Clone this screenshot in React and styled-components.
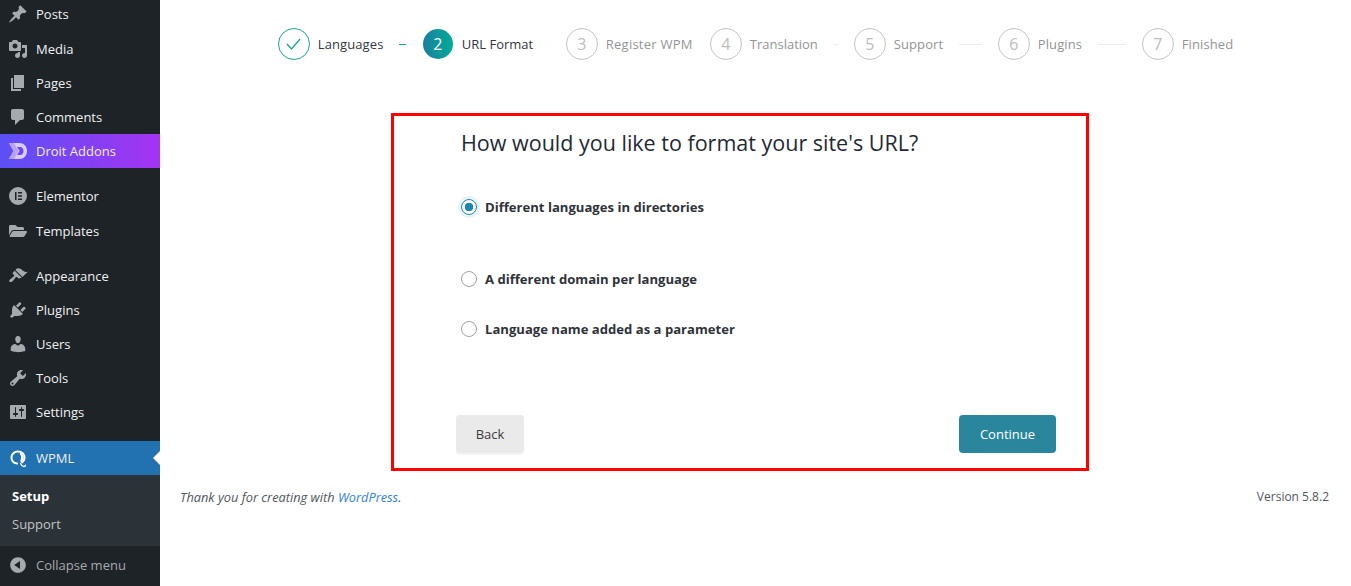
import React from 'react'
import styled, { createGlobalStyle } from 'styled-components'
import { FaFolderOpen } from 'react-icons/fa'

const Global = createGlobalStyle`
  html, body { margin: 0; padding: 0; height: 100%; background: #fff; }
  body { font-family: "Open Sans", "Liberation Sans", sans-serif; overflow: hidden; }
`

const Shell = styled.div`
  display: flex;
  height: 586px;
  overflow: hidden;
`

const Sidebar = styled.nav`
  width: 160px;
  flex: none;
  background: #1d2327;
  display: flex;
  flex-direction: column;
  overflow: hidden;
`

const Menu = styled.ul`
  list-style: none;
  margin: -3px 0 0;
  padding: 0;
`

const MenuItem = styled.li`
  position: relative;
  height: 34px;
  margin-top: ${p => p.$gap || 0}px;
  display: flex;
  align-items: center;
  padding-left: 8px;
  color: #f0f0f1;
  font-size: 13px;
  background: ${p => p.$bg || 'transparent'};
  svg { flex: none; }
`

const IconSlot = styled.span`
  width: 20px;
  height: 20px;
  margin-right: 8px;
  color: #a7aaad;
  display: flex;
  align-items: center;
  justify-content: center;
`

const Pointer = styled.span`
  position: absolute;
  right: 0;
  top: 10px;
  border: 7px solid transparent;
  border-left-width: 0;
  border-right-color: #fff;
`

const SubMenu = styled.ul`
  list-style: none;
  margin: 0;
  padding: 7px 0 8px;
  height: 71px;
  box-sizing: border-box;
  background: #2c3338;
`

const SubItem = styled.li`
  height: 28px;
  display: flex;
  align-items: center;
  padding-left: 12px;
  font-size: 13px;
  font-weight: ${p => (p.$active ? 700 : 400)};
  color: ${p => (p.$active ? '#fff' : '#c3c4c7')};
`

const Collapse = styled.div`
  display: flex;
  align-items: center;
  height: 38px;
  padding: 0 0 2px 8px;
  font-size: 13px;
  color: #a7aaad;
`

const Main = styled.main`
  flex: 1;
  min-width: 0;
  display: flex;
  flex-direction: column;
`

const Stepper = styled.ol`
  list-style: none;
  display: flex;
  justify-content: center;
  margin: 28px 0 0;
  padding: 0;
`

const Step = styled.li`
  display: flex;
  align-items: center;
  height: 32px;
  width: ${p => (p.$last ? 'auto' : '144px')};
  font-size: 13px;
  color: ${p => (p.$state === 'todo' ? '#949494' : '#33373d')};
`

const Circle = styled.span`
  width: 32px;
  height: 32px;
  box-sizing: border-box;
  flex: none;
  border-radius: 50%;
  border: 1px solid ${p => (p.$state === 'done' ? '#17a78f' : '#c4c4c4')};
  color: #bdbdbd;
  font-size: 16px;
  margin-right: 8px;
  display: flex;
  align-items: center;
  justify-content: center;
`

const ActiveCircle = styled(Circle)`
  width: 30px;
  height: 30px;
  margin: 0 9px 0 1px;
  border: none;
  color: #fff;
  background: linear-gradient(90deg, #1d7f9f, #01ac96);
`

const StepLabel = styled.span`
  white-space: nowrap;
  letter-spacing: ${p => p.$track || 0}px;
`

const StepLine = styled.span`
  flex: 1;
  height: 1px;
  margin: 0 16px;
  background: ${p => (p.$done ? '#17a78f' : '#ececec')};
`

const Card = styled.section`
  box-sizing: border-box;
  width: 698px;
  height: 358px;
  margin: 53px 0 0 231px;
  border: 3px solid #f00;
  padding: 0 30px 15px 62px;
  display: flex;
  flex-direction: column;
`

const Heading = styled.h2`
  margin: 10px 0 0 5px;
  font-size: 21.5px;
  line-height: 34px;
  font-weight: 400;
  color: #1f2a33;
`

const Options = styled.div`
  display: flex;
  flex-direction: column;
  margin: 35px 0 0 5px;
`

const Option = styled.label`
  display: flex;
  align-items: center;
  height: 24px;
  margin-bottom: ${p => p.$after}px;
  font-size: 13.1px;
  font-weight: 700;
  color: #2f3338;
`

const Radio = styled.span`
  box-sizing: border-box;
  width: 16px;
  height: 16px;
  margin-right: 8px;
  border-radius: 50%;
  border: 1px solid ${p => (p.$checked ? '#1f86ab' : '#a0a0a0')};
  background: ${p => (p.$checked ? 'radial-gradient(circle, #1f86ab 0 4px, #fff 4.6px)' : '#fff')};
  box-shadow: ${p => (p.$checked ? '0 0 0 3px #e8f3f7' : 'none')};
`

const Actions = styled.div`
  margin-top: auto;
  display: flex;
  justify-content: space-between;
`

const Button = styled.button`
  height: 38px;
  padding: 0;
  width: ${p => (p.$primary ? '97px' : '68px')};
  border: none;
  border-radius: 4px;
  font: 400 13px "Open Sans", "Liberation Sans", sans-serif;
  color: ${p => (p.$primary ? '#fff' : '#3a3a3f')};
  background: ${p => (p.$primary ? '#29869d' : '#eaeaea')};
  box-shadow: ${p => (p.$primary ? 'none' : '0 2px 0 #f3f3f3')};
`

const Footer = styled.footer`
  display: flex;
  justify-content: space-between;
  margin-top: 17px;
  padding: 0 22px 0 20px;
  font-size: 12px;
  line-height: 18px;
  color: #50575e;
`

const Thanks = styled.span`
  font-size: 12.8px;
  font-style: italic;
  a { color: #2f7fe8; text-decoration: none; }
`

const Dash = ({ d, size = 20 }) => (
  <svg width={size} height={size} viewBox="0 0 20 20" fill="currentColor"><path d={d} /></svg>
)

const DroitLogo = () => (
  <svg width="20" height="18" viewBox="0 0 20 18">
    <path fill="#d9cdfd" d="M1 1h10c5 0 8 3.500 8 8s-3 8-8 8H1l4.500-8z" />
    <path fill="#b9a3fa" d="M1 1h5l4.500 8L6 17H1l4.500-8z" />
    <path fill="#6f47f6" d="M9 5h3c2.500 0 3.500 2 3.500 4s-1 4-3.500 4H9l2.500-4z" />
  </svg>
)

const ElementorLogo = () => (
  <svg width="20" height="20" viewBox="0 0 20 20" fill="currentColor">
    <path fillRule="evenodd" d="M10 1a9 9 0 1 1 0 18 9 9 0 0 1 0-18zM7 6v8h1.500V6zm3 0v1.500h4V6zm0 3.200v1.500h4V9.200zm0 3.300V14h4v-1.500z" />
  </svg>
)

const WpmlLogo = () => (
  <svg width="20" height="22" viewBox="0 0 20 22" fill="none" stroke="#fff" strokeWidth="2" strokeLinecap="round">
    <path d="M9 16.500C5.500 16 3.500 13.500 3.500 10.500c0-3.600 2.800-6 6.500-6s6.500 2.400 6.500 6c0 2.200-1 3.800-2.500 4.800" />
    <path d="M13 6.500c1.500 2 1.500 5 .5 7.500" strokeWidth="2.400" />
    <path d="M12.500 16.500c.8 1.700 1.800 3 3.300 3 .9 0 1.700-.5 1.700-1.300" strokeWidth="1.300" />
  </svg>
)

const icons = {
  posts: 'M10.44 3.02l1.82-1.82 6.36 6.35-1.83 1.82c-1.05-.68-2.48-.57-3.41.36l-.75.75c-.92.93-1.04 2.35-.35 3.41l-1.83 1.82-2.41-2.41-2.8 2.79c-.42.42-3.38 2.71-3.8 2.29s1.86-3.39 2.28-3.81l2.79-2.79L4.100 9.360l1.830-1.820c1.050.690 2.480.570 3.400-.360l.750-.750c.930-.920 1.050-2.350.360-3.410z',
  media: 'M13 11V4c0-.55-.45-1-1-1h-1.670L9 1H5L3.670 3H2c-.55 0-1 .45-1 1v7c0 .55.45 1 1 1h10c.55 0 1-.45 1-1zM7 4.500c1.380 0 2.500 1.120 2.500 2.500S8.380 9.500 7 9.500 4.500 8.380 4.500 7 5.620 4.500 7 4.500zM14 6h5v10.500c0 1.380-1.120 2.500-2.500 2.500S14 17.880 14 16.500s1.120-2.500 2.500-2.500c.170 0 .340.020.500.050V9h-3V6zm-4 8.050V13h2v3.500c0 1.380-1.120 2.500-2.500 2.500S7 17.880 7 16.500 8.120 14 9.500 14c.170 0 .340.020.500.050z',
  pages: 'M6 15V2h10v13H6zm-1 1h8v2H3V5h2v11z',
  comments: 'M5 2h9c1.100 0 2 .9 2 2v7c0 1.100-.9 2-2 2h-2l-5 5v-5H5c-1.100 0-2-.9-2-2V4c0-1.100.9-2 2-2z',
  appearance: 'M14.480 11.060L7.410 3.990l1.500-1.500c.5-.56 2.300-.47 3.510.32 1.210.8 1.430 1.280 2.910 2.100 1.180.64 2.450 1.260 4.450.85zm-.71.71L6.700 4.700 4.930 6.470c-.39.39-.39 1.020 0 1.410l1.060 1.060c.39.39.39 1.030 0 1.420-.6.6-1.430 1.110-2.210 1.690-.35.26-.7.53-1.010.84C1.430 13.230.76 14.940 1.500 15.700s2.470.1 3.810-1.230c.3-.3.55-.65.8-1 .59-.8 1.130-1.620 1.700-2.200.39-.39 1.030-.39 1.420 0l1.060 1.060c.39.39 1.020.39 1.410 0z',
  plugins: 'M13.110 4.360L9.870 7.600 8 5.730l3.240-3.240c.35-.34 1.050-.2 1.560.32.52.51.66 1.210.31 1.550zm-8 1.770l.91-1.120 9.010 9.010-1.190.84c-.71.71-2.630 1.160-3.820 1.160H6.140L4.900 17.260c-.59.59-1.540.59-2.120 0-.59-.58-.59-1.530 0-2.120l1.240-1.240v-3.880c0-1.130.4-3.190 1.090-3.890zm7.260 3.970l3.240-3.240c.34-.35 1.040-.21 1.550.31.52.51.66 1.210.31 1.550l-3.240 3.250z',
  users: 'M10 9.250c-2.270 0-2.730-3.440-2.730-3.440C7 4.020 7.820 2 9.970 2c2.160 0 2.980 2.020 2.710 3.810 0 0-.41 3.440-2.680 3.440zm0 2.570L12.720 10c2.390 0 4.520 2.330 4.520 4.530v2.490s-3.650 1.130-7.240 1.130c-3.650 0-7.240-1.130-7.240-1.130v-2.490c0-2.250 1.940-4.480 4.470-4.480z',
  tools: 'M16.680 9.770c-1.340 1.340-3.300 1.670-4.950.99l-5.410 6.520c-.99.99-2.590.99-3.580 0s-.99-2.590 0-3.570l6.520-5.420c-.68-1.650-.35-3.610.99-4.950 1.280-1.280 3.120-1.620 4.720-1.060l-2.890 2.890 2.820 2.820 2.860-2.870c.53 1.580.18 3.390-1.080 4.650zM3.810 16.210c.4.39 1.040.39 1.430 0 .4-.4.4-1.040 0-1.430-.39-.4-1.030-.4-1.430 0-.39.39-.39 1.030 0 1.430z',
  settings: 'M18 16V4c0-.55-.45-1-1-1H3c-.55 0-1 .45-1 1v12c0 .55.45 1 1 1h14c.55 0 1-.45 1-1zM8 11h1c.55 0 1 .45 1 1s-.45 1-1 1H8v1.500c0 .28-.22.5-.5.5s-.5-.22-.5-.5V13H6c-.55 0-1-.45-1-1s.45-1 1-1h1V5.500c0-.28.22-.5.5-.5s.5.22.5.5V11zm5-2h-1c-.55 0-1-.45-1-1s.45-1 1-1h1V5.500c0-.28.22-.5.5-.5s.5.22.5.5V7h1c.55 0 1 .45 1 1s-.45 1-1 1h-1v5.500c0 .28-.22.5-.5.5s-.5-.22-.5-.5V9z',
  collapse: 'M10 2.160c4.330 0 7.840 3.510 7.840 7.840s-3.510 7.840-7.840 7.840S2.160 14.330 2.160 10 5.710 2.160 10 2.160zm2 11.720V6.120L6.180 9.970z',
}

const menu = [
  { label: 'Posts', icon: <Dash d={icons.posts} /> },
  { label: 'Media', icon: <Dash d={icons.media} />, gap: 1 },
  { label: 'Pages', icon: <Dash d={icons.pages} /> },
  { label: 'Comments', icon: <Dash d={icons.comments} /> },
  { label: 'Droit Addons', icon: <DroitLogo />, bg: 'linear-gradient(90deg, #5b50f5, #a533f2)' },
  { label: 'Elementor', icon: <ElementorLogo />, gap: 11 },
  { label: 'Templates', icon: <FaFolderOpen size={18} />, gap: 1 },
  { label: 'Appearance', icon: <Dash d={icons.appearance} />, gap: 11 },
  { label: 'Plugins', icon: <Dash d={icons.plugins} /> },
  { label: 'Users', icon: <Dash d={icons.users} /> },
  { label: 'Tools', icon: <Dash d={icons.tools} /> },
  { label: 'Settings', icon: <Dash d={icons.settings} /> },
  { label: 'WPML', icon: <WpmlLogo />, gap: 12, bg: '#2271b1', current: true },
]

const steps = [
  { label: 'Languages', track: 0.1 },
  { label: 'URL Format' },
  { label: 'Register WPM', track: 0.25 },
  { label: 'Translation' },
  { label: 'Support', track: 0.1 },
  { label: 'Plugins', track: 0.1 },
  { label: 'Finished', track: 0.1 },
]

const options = [
  { label: 'Different languages in directories', checked: true, after: 48 },
  { label: 'A different domain per language', after: 26 },
  { label: 'Language name added as a parameter', after: 0 },
]

export default function App() {
  return (
    <Shell>
      <Global />
      <Sidebar>
        <Menu>
          {menu.map(item => (
            <MenuItem key={item.label} $gap={item.gap} $bg={item.bg}>
              <IconSlot>{item.icon}</IconSlot>
              {item.label}
              {item.current && <Pointer />}
            </MenuItem>
          ))}
        </Menu>
        <SubMenu>
          <SubItem $active>Setup</SubItem>
          <SubItem>Support</SubItem>
        </SubMenu>
        <Collapse>
          <IconSlot><Dash d={icons.collapse} /></IconSlot>
          Collapse menu
        </Collapse>
      </Sidebar>
      <Main>
        <Stepper>
          {steps.map((step, i) => {
            const state = i === 0 ? 'done' : i === 1 ? 'active' : 'todo'
            const last = i === steps.length - 1
            return (
              <Step key={step.label} $state={state} $last={last}>
                {state === 'active' ? (
                  <ActiveCircle>{i + 1}</ActiveCircle>
                ) : (
                  <Circle $state={state}>
                    {state === 'done' ? (
                      <svg width="15" height="12" viewBox="0 0 15 12" fill="none" stroke="#17a78f" strokeWidth="1.300">
                        <path d="M1 6l4.500 5L14 1" />
                      </svg>
                    ) : i + 1}
                  </Circle>
                )}
                <StepLabel $track={step.track}>{step.label}</StepLabel>
                {!last && <StepLine $done={i === 0} />}
              </Step>
            )
          })}
        </Stepper>
        <Card>
          <Heading>How would you like to format your site's URL?</Heading>
          <Options>
            {options.map(o => (
              <Option key={o.label} $after={o.after}>
                <Radio $checked={o.checked} />
                {o.label}
              </Option>
            ))}
          </Options>
          <Actions>
            <Button>Back</Button>
            <Button $primary>Continue</Button>
          </Actions>
        </Card>
        <Footer>
          <Thanks>Thank you for creating with <a href="#wp">WordPress</a>.</Thanks>
          <span>Version 5.8.2</span>
        </Footer>
      </Main>
    </Shell>
  )
}
